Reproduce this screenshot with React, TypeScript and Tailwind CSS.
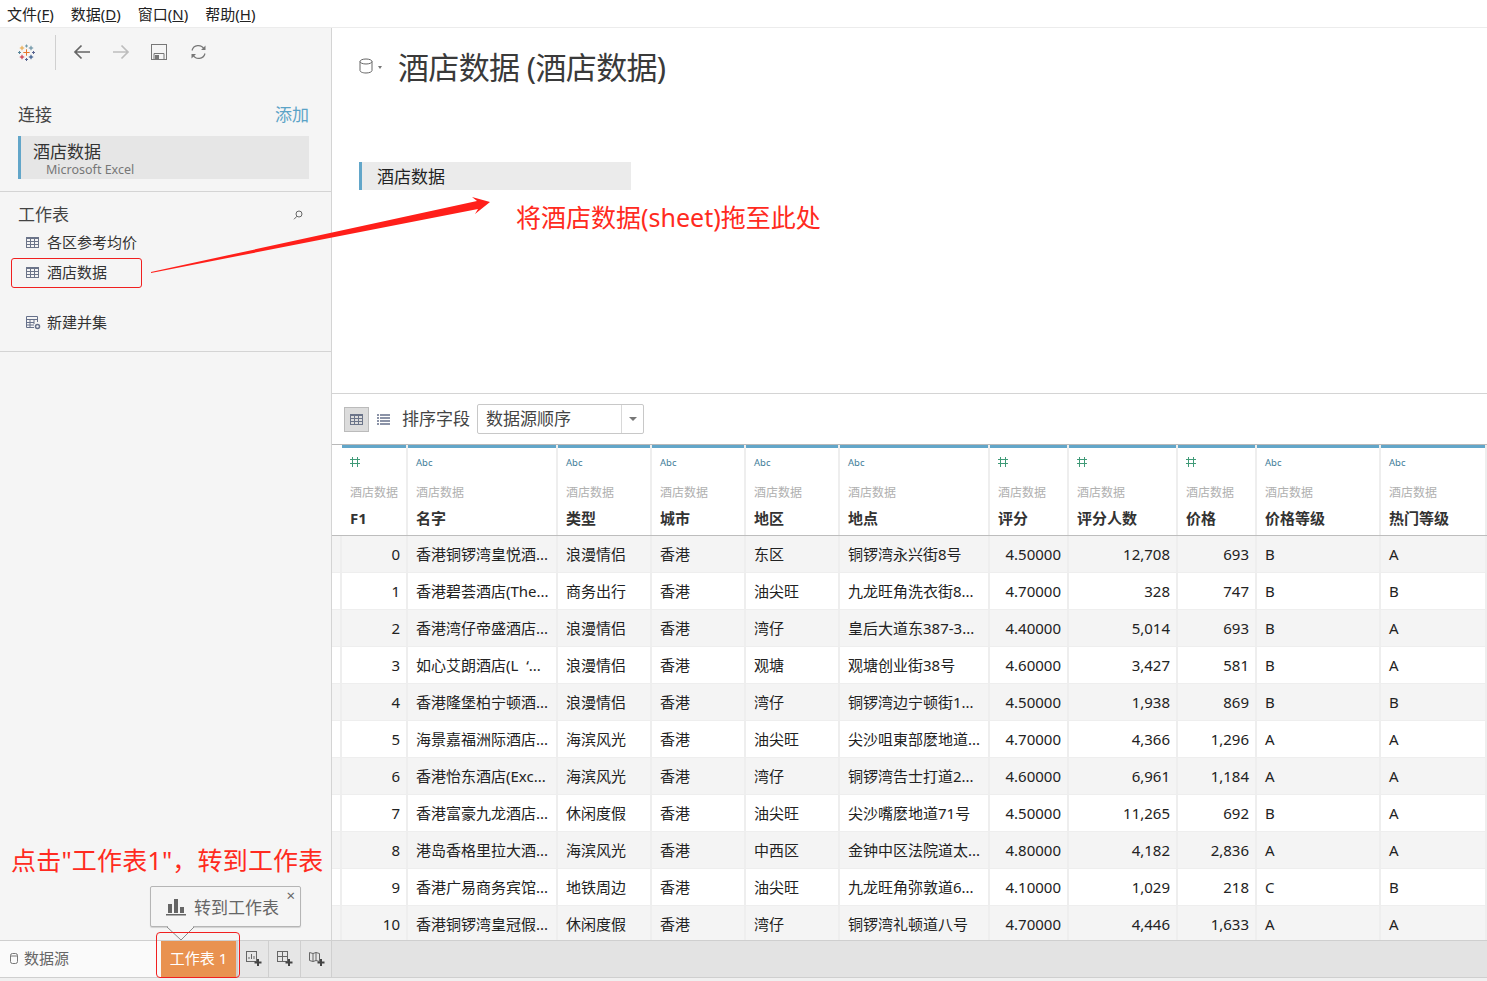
const ROW =
  "grid grid-cols-[10px_66px_150px_94px_94px_94px_150px_79px_109px_79px_124px_106px]";
const FONT = "font-['Noto_Sans','Noto_Sans_CJK_SC',sans-serif]";

type Kind = "num" | "abc";

const columns: { name: string; kind: Kind }[] = [
  { name: "F1", kind: "num" },
  { name: "名字", kind: "abc" },
  { name: "类型", kind: "abc" },
  { name: "城市", kind: "abc" },
  { name: "地区", kind: "abc" },
  { name: "地点", kind: "abc" },
  { name: "评分", kind: "num" },
  { name: "评分人数", kind: "num" },
  { name: "价格", kind: "num" },
  { name: "价格等级", kind: "abc" },
  { name: "热门等级", kind: "abc" },
];

const rows: string[][] = [
  ["0", "香港铜锣湾皇悦酒...", "浪漫情侣", "香港", "东区", "铜锣湾永兴街8号", "4.50000", "12,708", "693", "B", "A"],
  ["1", "香港碧荟酒店(The...", "商务出行", "香港", "油尖旺", "九龙旺角洗衣街8...", "4.70000", "328", "747", "B", "B"],
  ["2", "香港湾仔帝盛酒店...", "浪漫情侣", "香港", "湾仔", "皇后大道东387-3...", "4.40000", "5,014", "693", "B", "A"],
  ["3", "如心艾朗酒店(L  ‘...", "浪漫情侣", "香港", "观塘", "观塘创业街38号", "4.60000", "3,427", "581", "B", "A"],
  ["4", "香港隆堡柏宁顿酒...", "浪漫情侣", "香港", "湾仔", "铜锣湾边宁顿街1...", "4.50000", "1,938", "869", "B", "B"],
  ["5", "海景嘉福洲际酒店...", "海滨风光", "香港", "油尖旺", "尖沙咀東部麽地道...", "4.70000", "4,366", "1,296", "A", "A"],
  ["6", "香港怡东酒店(Exc...", "海滨风光", "香港", "湾仔", "铜锣湾告士打道2...", "4.60000", "6,961", "1,184", "A", "A"],
  ["7", "香港富豪九龙酒店...", "休闲度假", "香港", "油尖旺", "尖沙嘴麽地道71号", "4.50000", "11,265", "692", "B", "A"],
  ["8", "港岛香格里拉大酒...", "海滨风光", "香港", "中西区", "金钟中区法院道太...", "4.80000", "4,182", "2,836", "A", "A"],
  ["9", "香港广易商务宾馆...", "地铁周边", "香港", "油尖旺", "九龙旺角弥敦道6...", "4.10000", "1,029", "218", "C", "B"],
  ["10", "香港铜锣湾皇冠假...", "休闲度假", "香港", "湾仔", "铜锣湾礼顿道八号", "4.70000", "4,446", "1,633", "A", "A"],
];

function TableIcon() {
  return (
    <svg width="13" height="11" viewBox="0 0 13 11" fill="none" stroke="#6b7489">
      <rect x="0.5" y="0.5" width="12" height="10" />
      <path d="M0 1.5h13M0 4.5h13M0 7.5h13M4.5 1v10M8.5 1v10" />
    </svg>
  );
}

function Logo() {
  const crosses: [number, number, number, string][] = [
    [8.5, 8.5, 3.2, "#e8762c"],
    [4, 4, 2.2, "#e8a33d"],
    [13, 4, 2.2, "#5b879b"],
    [4, 13, 2.2, "#c72035"],
    [13, 13, 2.2, "#1f447e"],
    [8.5, 2, 1.5, "#7099a6"],
    [1.5, 8.5, 1.5, "#59879b"],
    [15.5, 8.5, 1.5, "#5b6591"],
    [8.5, 15.5, 1.5, "#5b6591"],
  ];
  return (
    <svg width="17" height="17" viewBox="0 0 17 17" strokeWidth="1">
      {crosses.map(([x, y, r, c], i) => (
        <path key={i} d={`M${x - r} ${y}H${x + r}M${x} ${y - r}V${y + r}`} stroke={c} fill="none" />
      ))}
    </svg>
  );
}

function TypeIcon({ kind }: { kind: Kind }) {
  if (kind === "num") {
    return (
      <div className="pt-[2px]">
        <svg width="10" height="10" viewBox="0 0 10 10" stroke="#3f9a77" fill="none">
          <path d="M2.5 0v10M7.5 0v10M0 2.5h10M0 6.5h10" />
        </svg>
      </div>
    );
  }
  return <span className="block pt-[1px] text-[9.5px] leading-[14px] text-[#3f7d99]">Abc</span>;
}

function AddSheetIcon({ type }: { type: "chart" | "table" | "story" }) {
  return (
    <svg width="17" height="16" viewBox="0 0 17 16" fill="none" stroke="#666" className="ml-[2px]">
      {type === "chart" && (
        <>
          <rect x="0.5" y="0.5" width="10" height="10" />
          <path d="M3 8V6M5.5 8V3M8 8V5" />
        </>
      )}
      {type === "table" && (
        <>
          <rect x="0.5" y="0.5" width="10" height="10" />
          <path d="M0 5.5h11M5.5 0v11" />
        </>
      )}
      {type === "story" && <path d="M0.5 1.5l3.5 1 3-1 3.5 1v8l-3.5-1-3 1-3.5-1zM4 2.5v8M7 1.5v8" />}
      <path d="M12 8v7M8.5 11.5h7" stroke="#444" strokeWidth="2" />
    </svg>
  );
}

function Sidebar() {
  return (
    <aside className="relative flex w-[332px] shrink-0 flex-col border-r border-[#d4d4d4] bg-[#f5f5f5]">
      <div className="flex h-[46px] items-center pl-[18px] pt-[2px]">
        <Logo />
        <div className="ml-[20px] mt-[1px] h-[35px] w-px bg-[#d0d0d0]" />
        <svg width="18" height="16" viewBox="0 0 18 16" fill="none" stroke="#666" strokeWidth="1.7" className="ml-[17px]">
          <path d="M17 8H2M8.5 1.5L2 8l6.5 6.5" />
        </svg>
        <svg width="18" height="16" viewBox="0 0 18 16" fill="none" stroke="#bdbdbd" strokeWidth="1.7" className="ml-[21px]">
          <path d="M1 8h15M9.5 1.5L16 8l-6.5 6.5" />
        </svg>
        <svg width="16" height="16" viewBox="0 0 16 16" fill="none" stroke="#777" className="ml-[21px]">
          <rect x="0.5" y="0.5" width="15" height="15" />
          <path d="M3 15.5V9.5h10v6" />
          <rect x="4" y="11" width="4" height="4" fill="#777" stroke="none" />
        </svg>
        <svg width="17" height="16" viewBox="0 0 17 16" fill="none" stroke="#777" strokeWidth="1.2" className="ml-[23px]">
          <path d="M2 6.5A6.5 6.5 0 0 1 14 5M15 9.5A6.5 6.5 0 0 1 3 11" />
          <path d="M15.5 1.5V6h-4.5zM1.5 14.5V10H6z" fill="#777" stroke="none" />
        </svg>
      </div>

      <div className="mt-[29px] flex items-center justify-between pl-[18px] pr-[22px] leading-[24px]">
        <span className="text-[17px] text-[#444]">连接</span>
        <span className="text-[17px] text-[#5ba3c7]">添加</span>
      </div>
      <div className="ml-[18px] mr-[22px] mt-[9px] h-[43px] border-l-[3px] border-[#62a6c9] bg-[#e6e6e6] pl-[12px]">
        <div className="pt-[5px] text-[17px] leading-[22px] text-[#333]">酒店数据</div>
        <div className="pl-[13px] text-[12.5px] leading-[14px] text-[#777]">Microsoft Excel</div>
      </div>
      <div className="mt-[12px] h-px bg-[#d4d4d4]" />

      <div className="flex h-[38px] items-center justify-between pl-[18px] pr-[28px] pt-[7px]">
        <span className="text-[17px] text-[#444]">工作表</span>
        <svg width="10" height="10" viewBox="0 0 10 10" fill="none" stroke="#666">
          <circle cx="6" cy="4" r="3" />
          <path d="M4 6.2L1 9.3" />
        </svg>
      </div>
      <div className="flex h-[24px] items-center pl-[26px] text-[15px] text-[#333]">
        <TableIcon />
        <span className="ml-[8px]">各区参考均价</span>
      </div>
      <div className="mt-[6px] flex h-[24px] items-center pl-[26px] text-[15px] text-[#333]">
        <TableIcon />
        <span className="ml-[8px]">酒店数据</span>
      </div>
      <div className="mt-[26px] flex h-[24px] items-center pl-[26px] text-[15px] text-[#333]">
        <svg width="15" height="14" viewBox="0 0 15 14" fill="none" stroke="#66708a" className="mt-[2px]">
          <path d="M8 11.5H0.5V0.5h11V6M0 3.5h12M0 6.5h8M0 9h8M4 3v8M8 3v5" />
          <circle cx="11.5" cy="10.5" r="2" strokeWidth="1.5" />
        </svg>
        <span className="ml-[6px]">新建并集</span>
      </div>
      <div className="mt-[17px] h-px bg-[#d4d4d4]" />
    </aside>
  );
}

function DataTable() {
  return (
    <div className="min-h-0 flex-1 overflow-hidden">
      <div className={`${ROW} h-[92px] border-y border-t-[#b9b9b9] border-b-[#bdbdbd]`}>
        <div />
        {columns.map((col) => (
          <div key={col.name} className="border-r-2 border-[#eeeeee]">
            <div className="h-[3px] bg-[#62a6c9]" />
            <div className="pl-[8px]">
              <div className="mt-[7px] h-[16px]">
                <TypeIcon kind={col.kind} />
              </div>
              <div className="mt-[13px] text-[12px] leading-[18px] text-[#b0b0b0]">酒店数据</div>
              <div className="mt-[6px] text-[15px] font-bold leading-[20px] text-[#333]">{col.name}</div>
            </div>
          </div>
        ))}
      </div>
      {rows.map((row, i) => (
        <div
          key={row[0]}
          className={`${ROW} h-[37px] border-b border-[#eeeeee] text-[15px] leading-[36px] text-[#222] ${
            i % 2 === 0 ? "bg-[#f4f4f4]" : "bg-white"
          }`}
        >
          <div className="border-r-2 border-[#eeeeee]" />
          {row.map((cell, c) => (
            <div
              key={c}
              className={`overflow-hidden whitespace-pre border-r-2 border-[#eeeeee] ${
                columns[c].kind === "num" ? "pr-[6px] text-right" : "pl-[8px]"
              }`}
            >
              {cell}
            </div>
          ))}
        </div>
      ))}
    </div>
  );
}

function Main() {
  return (
    <main className="flex min-w-0 flex-1 flex-col bg-white">
      <div className="h-[365px] shrink-0 pl-[27px]">
        <div className="flex items-center pt-[17px]">
          <svg width="14" height="16" viewBox="0 0 14 16" fill="none" stroke="#666" className="-mt-[2px]">
            <ellipse cx="7" cy="3.5" rx="6" ry="2.5" />
            <path d="M1 3.5v9c0 1.4 2.7 2.5 6 2.5s6-1.1 6-2.5v-9" />
          </svg>
          <span className="ml-[5px] h-0 w-0 border-x-[2.5px] border-t-[3px] border-x-transparent border-t-[#777]" />
          <span className="ml-[16px] text-[31px] leading-[44px] tracking-[-0.65px] text-[#3a3a3a]">
            酒店数据 (酒店数据)
          </span>
        </div>
        <div className="mt-[73px] flex h-[28px] w-[272px] items-center border-l-[3px] border-[#62a6c9] bg-[#ebebeb] pl-[15px] pt-[2px] text-[17px] text-[#222]">
          酒店数据
        </div>
      </div>

      <div className="flex h-[51px] shrink-0 items-center border-t border-[#d4d4d4] pl-[12px]">
        <div className="flex h-[25px] w-[25px] items-center justify-center border border-[#bbb] bg-[#dcdcdc]">
          <TableIcon />
        </div>
        <svg width="13" height="11" viewBox="0 0 13 11" stroke="#66708a" className="ml-[8px]">
          <path d="M0 1h2M3 1h10M0 4h2M3 4h10M0 7h2M3 7h10M0 10h2M3 10h10" strokeWidth="1.6" />
        </svg>
        <span className="ml-[12px] text-[17px] text-[#444]">排序字段</span>
        <div className="ml-[7px] flex h-[30px] w-[167px] items-center rounded-[2px] border border-[#c8c8c8]">
          <span className="flex-1 pl-[8px] text-[17px] text-[#444]">数据源顺序</span>
          <span className="flex h-full w-[22px] items-center justify-center border-l border-[#d8d8d8]">
            <span className="h-0 w-0 border-x-[4px] border-t-[4px] border-x-transparent border-t-[#777]" />
          </span>
        </div>
      </div>
      <DataTable />
    </main>
  );
}

function BottomBar() {
  return (
    <footer className="flex h-[38px] shrink-0 border-y border-[#cfcfcf] bg-[#e3e3e3]">
      <div className="flex w-[161px] items-center bg-[#fafafa] pb-[2px] pl-[10px] text-[15px] text-[#666]">
        <svg width="8" height="11" viewBox="0 0 8 11" fill="none" stroke="#777">
          <rect x="0.5" y="0.5" width="7" height="10" rx="2" />
          <path d="M0.5 3h7" />
        </svg>
        <span className="ml-[6px]">数据源</span>
      </div>
      <div className="flex w-[75px] items-center justify-center bg-[#e99250] pb-[2px] text-[15px] text-white">工作表 1</div>
      <div className="flex w-[32px] items-center justify-center border-l-2 border-[#cfcfcf] bg-[#e6e6e6]">
        <AddSheetIcon type="chart" />
      </div>
      <div className="flex w-[32px] items-center justify-center border-l border-[#cfcfcf] bg-[#e6e6e6]">
        <AddSheetIcon type="table" />
      </div>
      <div className="flex w-[32px] items-center justify-center border-x border-[#cfcfcf] bg-[#e6e6e6]">
        <AddSheetIcon type="story" />
      </div>
    </footer>
  );
}

function Annotations() {
  return (
    <>
      <svg width="1487" height="981" className="pointer-events-none absolute left-0 top-0">
        <polygon points="151,272 151,273 478,209 475,214 490,202 472,197 477,201" fill="#ff1f1a" />
      </svg>
      <div className="absolute left-[11px] top-[258px] h-[30px] w-[131px] rounded-[3px] border border-[#f02020]" />
      <div className="absolute left-[516px] top-[199px] text-[25px] leading-[36px] text-[#ff2a20]">
        将酒店数据(sheet)拖至此处
      </div>
      <div className="absolute left-[11px] top-[842px] whitespace-nowrap text-[25px] leading-[36px] tracking-[0.2px] text-[#ff2a20]">
        点击"工作表1"，转到工作表
      </div>

      <div className="absolute left-[150px] top-[886px] flex h-[41px] w-[151px] items-center rounded-[2px] border border-[#b5b5b5] bg-[#f5f5f5] pl-[15px] pt-[3px] text-[17px] text-[#666] shadow-[0_1px_1px_rgba(0,0,0,0.15)]">
        <svg width="20" height="18" viewBox="0 0 20 18" fill="#666" className="-mt-[2px]">
          <rect x="2" y="6" width="4" height="9" />
          <rect x="8" y="1" width="4" height="14" />
          <rect x="14" y="9" width="4" height="6" />
          <rect x="0" y="16" width="20" height="1.5" />
        </svg>
        <span className="ml-[8px]">转到工作表</span>
        <span className="absolute right-[5px] top-[1px] text-[15px] leading-[14px] text-[#666]">×</span>
      </div>
      <svg width="28" height="15" viewBox="0 0 28 15" className="absolute left-[167px] top-[926px]">
        <path d="M0 1L14 14 27 1" fill="#f5f5f5" stroke="#8a8a8a" />
        <path d="M1 0h25" stroke="#f5f5f5" strokeWidth="2" />
      </svg>
      <div className="pointer-events-none absolute left-[156px] top-[932px] h-[46px] w-[84px] rounded-[4px] border border-[#f02020]" />
    </>
  );
}

export default function App() {
  return (
    <div className={`relative flex h-[981px] w-[1487px] flex-col overflow-hidden bg-white ${FONT}`}>
      <nav className="flex h-[28px] shrink-0 items-center gap-[17px] border-b border-[#ececec] pl-[7px] pt-[2px] text-[15px] text-[#222]">
        <span>文件(<u>F</u>)</span>
        <span>数据(<u>D</u>)</span>
        <span>窗口(<u>N</u>)</span>
        <span>帮助(<u>H</u>)</span>
      </nav>
      <div className="flex min-h-0 flex-1">
        <Sidebar />
        <Main />
      </div>
      <BottomBar />
      <div className="h-[3px] shrink-0 bg-[#f0f0f0]" />
      <Annotations />
    </div>
  );
}
